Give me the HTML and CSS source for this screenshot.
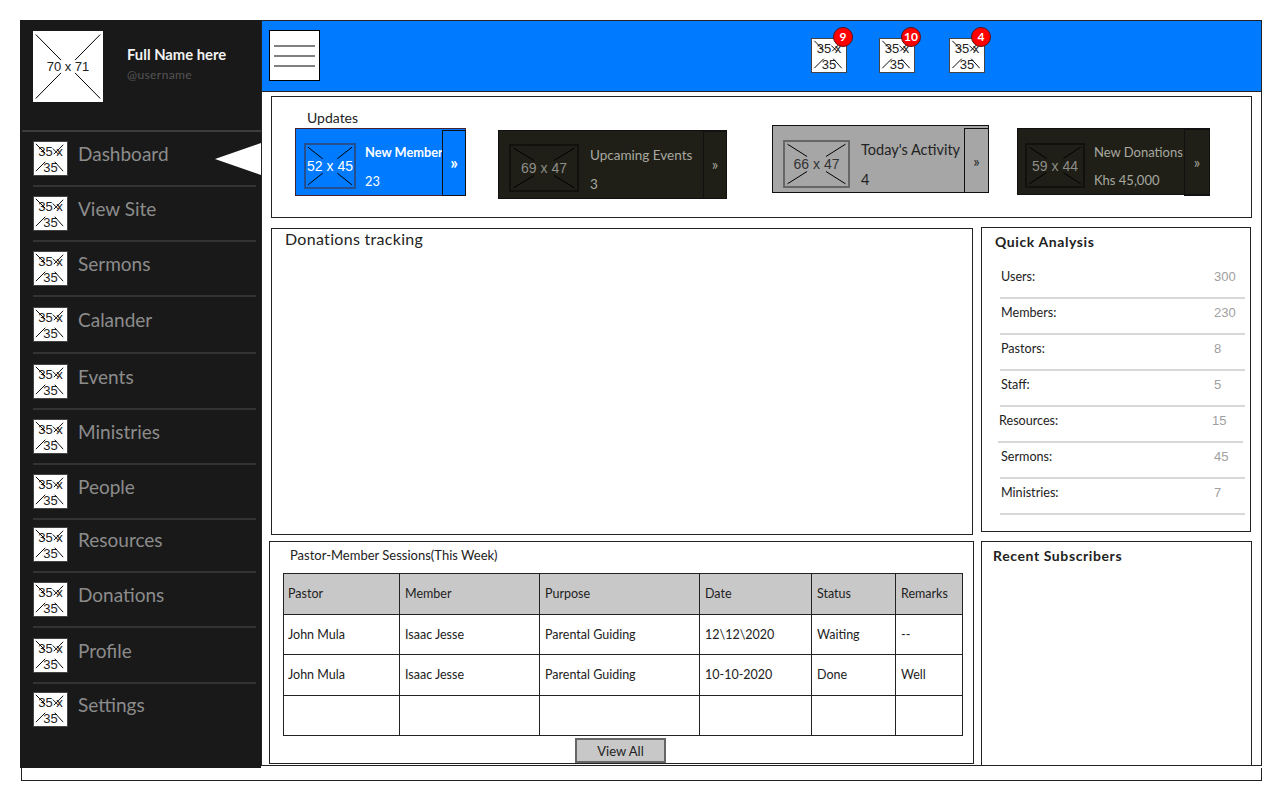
FILE: index.html
```html
<!DOCTYPE html>
<html lang="en">
<head>
  <meta charset="UTF-8">
  <meta name="viewport" content="width=device-width, initial-scale=1.0">
  <title>Church Dashboard</title>
  <link rel="stylesheet" href="styles.css">
</head>
<body>
  <svg class="defs" aria-hidden="true">
    <symbol id="ph-x" viewBox="0 0 100 100" preserveAspectRatio="none">
      <path d="M4 5 35 33M96 5 65 33M4 95 35 67M96 95 65 67" stroke="#000" fill="none" vector-effect="non-scaling-stroke"/>
    </symbol>
    <symbol id="ph-x-tight" viewBox="0 0 100 100" preserveAspectRatio="none">
      <path d="M4 5 40 41M96 5 60 41M4 95 40 59M96 95 60 59" stroke="#000" fill="none" vector-effect="non-scaling-stroke"/>
    </symbol>
    <symbol id="ph-icon" viewBox="0 0 35 35">
      <path d="M3 3 13 13M32 4 22 14M21 8 27 14M3 32 13 22M32 32 23 22" stroke="#000" fill="none"/>
    </symbol>
  </svg>

  <div class="app">
    <div class="app-body">
      <aside class="sidebar">
        <div class="profile">
          <div class="ph ph-avatar">
            <svg><use href="#ph-x-tight"/></svg>
            <span>70 x 71</span>
          </div>
          <div class="profile-text">
            <div class="profile-name">Full Name here</div>
            <div class="profile-user">@username</div>
          </div>
        </div>
        <nav class="nav">
          <a class="nav-item"><span class="icon"><svg><use href="#ph-icon"/></svg><span>35 x 35</span></span>Dashboard</a>
          <a class="nav-item"><span class="icon"><svg><use href="#ph-icon"/></svg><span>35 x 35</span></span>View Site</a>
          <a class="nav-item"><span class="icon"><svg><use href="#ph-icon"/></svg><span>35 x 35</span></span>Sermons</a>
          <a class="nav-item"><span class="icon"><svg><use href="#ph-icon"/></svg><span>35 x 35</span></span>Calander</a>
          <a class="nav-item"><span class="icon"><svg><use href="#ph-icon"/></svg><span>35 x 35</span></span>Events</a>
          <a class="nav-item"><span class="icon"><svg><use href="#ph-icon"/></svg><span>35 x 35</span></span>Ministries</a>
          <a class="nav-item"><span class="icon"><svg><use href="#ph-icon"/></svg><span>35 x 35</span></span>People</a>
          <a class="nav-item"><span class="icon"><svg><use href="#ph-icon"/></svg><span>35 x 35</span></span>Resources</a>
          <a class="nav-item"><span class="icon"><svg><use href="#ph-icon"/></svg><span>35 x 35</span></span>Donations</a>
          <a class="nav-item"><span class="icon"><svg><use href="#ph-icon"/></svg><span>35 x 35</span></span>Profile</a>
          <a class="nav-item"><span class="icon"><svg><use href="#ph-icon"/></svg><span>35 x 35</span></span>Settings</a>
        </nav>
        <div class="pointer"></div>
      </aside>

      <main class="main">
        <header class="topbar">
          <div class="burger"><i></i><i></i><i></i></div>
          <div class="alerts">
            <div class="icon alert"><svg><use href="#ph-icon"/></svg><span>35 x 35</span><b class="badge">9</b></div>
            <div class="icon alert"><svg><use href="#ph-icon"/></svg><span>35 x 35</span><b class="badge">10</b></div>
            <div class="icon alert"><svg><use href="#ph-icon"/></svg><span>35 x 35</span><b class="badge">4</b></div>
          </div>
        </header>

        <section class="panel updates">
          <div class="updates-title">Updates</div>
          <div class="cards">
            <div class="card card-members">
              <div class="ph"><svg><use href="#ph-x"/></svg><span>52 x 45</span></div>
              <div class="card-text"><strong>New Member</strong><span>23</span></div>
              <div class="card-more">&#187;</div>
            </div>
            <div class="card card-events">
              <div class="ph"><svg><use href="#ph-x"/></svg><span>69 x 47</span></div>
              <div class="card-text"><span>Upcaming Events</span><span>3</span></div>
              <div class="card-more">&#187;</div>
            </div>
            <div class="card card-activity">
              <div class="ph"><svg><use href="#ph-x"/></svg><span>66 x 47</span></div>
              <div class="card-text"><span>Today's Activity</span><span>4</span></div>
              <div class="card-more">&#187;</div>
            </div>
            <div class="card card-donations">
              <div class="ph"><svg><use href="#ph-x"/></svg><span>59 x 44</span></div>
              <div class="card-text"><span>New Donations</span><span>Khs 45,000</span></div>
              <div class="card-more">&#187;</div>
            </div>
          </div>
        </section>

        <div class="lower">
          <section class="panel chart">
            <h2 class="chart-title">Donations tracking</h2>
          </section>

          <section class="panel quick">
            <h3 class="side-title">Quick Analysis</h3>
            <div class="stat"><span>Users:</span><em>300</em></div>
            <div class="stat"><span>Members:</span><em>230</em></div>
            <div class="stat"><span>Pastors:</span><em>8</em></div>
            <div class="stat"><span>Staff:</span><em>5</em></div>
            <div class="stat stat-shift"><span>Resources:</span><em>15</em></div>
            <div class="stat"><span>Sermons:</span><em>45</em></div>
            <div class="stat"><span>Ministries:</span><em>7</em></div>
          </section>

          <section class="panel sessions">
            <div class="sessions-title">Pastor-Member Sessions(This Week)</div>
            <table class="sessions-table">
              <colgroup>
                <col class="col-pastor"><col class="col-member"><col class="col-purpose">
                <col class="col-date"><col class="col-status"><col class="col-remarks">
              </colgroup>
              <thead>
                <tr><th>Pastor</th><th>Member</th><th>Purpose</th><th>Date</th><th>Status</th><th>Remarks</th></tr>
              </thead>
              <tbody>
                <tr><td>John Mula</td><td>Isaac Jesse</td><td>Parental Guiding</td><td>12\12\2020</td><td>Waiting</td><td>--</td></tr>
                <tr><td>John Mula</td><td>Isaac Jesse</td><td>Parental Guiding</td><td>10-10-2020</td><td>Done</td><td>Well</td></tr>
                <tr><td></td><td></td><td></td><td></td><td></td><td></td></tr>
              </tbody>
            </table>
            <button class="view-all">View All</button>
          </section>

          <section class="panel subscribers">
            <h3 class="side-title">Recent Subscribers</h3>
          </section>
        </div>
      </main>
    </div>
    <div class="app-foot"></div>
  </div>
</body>
</html>
```

FILE: styles.css
```css
body {
  margin: 0;
  background: #fff;
  color: #222;
  font-family: Lato, "Open Sans", sans-serif;
}
.defs {
  display: none;
}

.app {
  width: 1242px;
  margin: 20px 0 0 20px;
}
.app-body {
  display: flex;
  align-items: flex-start;
  height: 748px;
}
.app-foot {
  height: 12px;
  margin-left: 1px;
  border: 1px solid #222;
  border-top: none;
}

/* placeholders */
.ph {
  position: relative;
  flex: none;
  display: flex;
  align-items: center;
  justify-content: center;
  box-sizing: border-box;
  font-family: "Liberation Sans", sans-serif;
  font-size: 14px;
}
.ph svg {
  position: absolute;
  inset: 0;
  width: 100%;
  height: 100%;
}
.icon {
  position: relative;
  flex: none;
  display: block;
  box-sizing: border-box;
  width: 35px;
  height: 35px;
  background: #fff;
  border: 1px solid #444;
  color: #222;
  font-family: "Liberation Sans", sans-serif;
  font-size: 13px;
  font-weight: 400;
  line-height: 16px;
  text-align: center;
  letter-spacing: 0;
}
.icon svg {
  position: absolute;
  inset: -1px;
  width: 100%;
  height: 100%;
}
.icon span {
  display: block;
  padding: 2px 3px 0;
}

/* sidebar */
.sidebar {
  position: relative;
  flex: none;
  width: 241px;
  height: 748px;
  background: #191919;
}
.profile {
  display: flex;
  box-sizing: border-box;
  height: 112px;
  padding: 11px 0 0 11px;
  border-bottom: 2px solid #3c3c3c;
  margin-left: 2px;
}
.ph-avatar {
  width: 70px;
  height: 71px;
  background: #fff;
  color: #222;
  font-size: 13px;
}
.profile-text {
  margin: 14px 0 0 24px;
}
.profile-name {
  color: #f2f2f2;
  font-size: 14.8px;
  font-weight: 700;
  line-height: 18px;
}
.profile-user {
  margin-top: 4px;
  color: #555;
  font-size: 12px;
  line-height: 16px;
  letter-spacing: .4px;
}
.nav {
  padding: 0 5px 0 13px;
}
.nav-item {
  display: flex;
  box-sizing: border-box;
  height: 55px;
  padding-top: 9px;
  gap: 10px;
  border-bottom: 2px solid #333;
  color: #8c8c8c;
  font-size: 19px;
  line-height: 26px;
}
.nav-item:last-child {
  border-bottom: none;
}
.nav-item:nth-child(4),
.nav-item:nth-child(5) {
  margin-top: 1px;
}
.nav-item:nth-child(4) {
  height: 56px;
}
.nav-item:nth-child(8) {
  margin-top: -2px;
}
.nav-item:nth-child(10) {
  margin-top: 1px;
}
.nav-item:nth-child(11) {
  margin-top: -1px;
}
.pointer {
  position: absolute;
  top: 123px;
  right: 0;
  width: 46px;
  height: 32px;
  background: #fff;
  clip-path: polygon(0 50%, 100% 0, 100% 100%);
}

/* main area */
.main {
  flex: none;
  box-sizing: border-box;
  width: 1001px;
  height: 746px;
  border: 1px solid #222;
  border-top: none;
}
.topbar {
  display: flex;
  box-sizing: border-box;
  height: 72px;
  padding: 9px 0 0 7px;
  background: #007aff;
  border-top: 1px solid #222;
  border-bottom: 1px solid #222;
}
.burger {
  display: flex;
  flex-direction: column;
  box-sizing: border-box;
  width: 51px;
  height: 51px;
  padding: 14px 4px 0;
  gap: 8px;
  background: #fff;
  border: 1px solid #000;
}
.burger i {
  display: block;
  height: 2px;
  background: #808080;
}
.alerts {
  display: flex;
  gap: 32px;
  margin: 8px 0 0 491px;
}
.alert {
  width: 36px;
}
.alert:last-child {
  margin-left: 2px;
}
.badge {
  position: absolute;
  top: -12px;
  right: -7px;
  box-sizing: border-box;
  width: 20px;
  height: 20px;
  background: #f00;
  border: 1px solid #5a1010;
  border-radius: 50%;
  color: #fff;
  font-family: Lato, sans-serif;
  font-size: 12px;
  font-weight: 700;
  line-height: 18px;
}

.panel {
  box-sizing: border-box;
  border: 1px solid #222;
  background: #fff;
}
.updates {
  height: 122px;
  margin: 4px 9px 0 9px;
  padding: 13px 0 0 23px;
}
.updates-title {
  padding-left: 12px;
  font-size: 14px;
  line-height: 16px;
}
.cards {
  display: flex;
  align-items: flex-start;
  margin-top: 2px;
}
.card {
  display: flex;
  box-sizing: border-box;
  color: #a8a8a0;
  font-size: 13.5px;
  line-height: 18px;
  border: 1px solid #111;
}
.card-text {
  flex: 1;
  min-width: 0;
  display: flex;
  flex-direction: column;
  gap: 11px;
  white-space: nowrap;
}
.card-more {
  flex: none;
  width: 24px;
  box-sizing: border-box;
  margin: 0 -1px -1px 0;
  border: 1px solid #111;
  text-align: center;
  font-size: 15px;
  line-height: 64px;
}
.card .ph {
  border: 2px solid #12120c;
  color: #8e8e88;
}

.card-members {
  width: 171px;
  height: 68px;
  background: #007aff;
  border-color: #4a2030;
  color: #fff;
}
.card-members .ph {
  width: 52px;
  height: 46px;
  margin: 14px 9px 0 8px;
  border-color: #24508f;
  color: #fff;
}
.card-members .card-text {
  padding-top: 14px;
  font-size: 12.8px;
}
.card-members .card-more {
  margin-top: 1px;
  background: #007aff;
  font-size: 17px;
  font-weight: 700;
}

.card-events {
  width: 229px;
  height: 69px;
  margin: 2px 0 0 32px;
  background: #1f1f17;
}
.card-events .ph {
  width: 70px;
  height: 48px;
  margin: 13px 11px 0 10px;
}
.card-events .card-text {
  padding-top: 15px;
}

.card-activity {
  width: 217px;
  height: 68px;
  margin: -3px 0 0 45px;
  background: #a6a6a6;
  color: #222;
}
.card-activity .ph {
  width: 67px;
  height: 48px;
  margin: 14px 11px 0 10px;
  border-color: #666;
  color: #333;
}
.card-activity .card-text {
  padding-top: 15px;
  gap: 12px;
  font-size: 14.5px;
}
.card-activity .card-more {
  width: 25px;
  margin-top: 2px;
}

.card-donations {
  width: 193px;
  height: 67px;
  margin-left: 28px;
  background: #1f1f17;
}
.card-donations .ph {
  width: 60px;
  height: 45px;
  margin: 14px 9px 0 7px;
}
.card-donations .card-text {
  padding-top: 14px;
  gap: 10px;
  font-size: 13px;
}
.card-donations .card-more {
  width: 26px;
  margin-bottom: -2px;
}

.lower {
  display: grid;
  grid-template-columns: 703px 271px;
  grid-template-rows: 308px 225px;
  column-gap: 7px;
  row-gap: 5px;
  margin: 10px 0 0 9px;
}
.chart {
  height: 307px;
  margin-right: 1px;
}
.chart-title {
  margin: 0;
  padding: 0 0 0 13px;
  font-size: 16px;
  font-weight: 400;
  line-height: 20px;
  letter-spacing: .3px;
}
.quick {
  height: 305px;
  margin: -1px 1px 0 0;
  padding: 6px 5px 0 18px;
}
.side-title {
  margin: 0;
  font-size: 14px;
  font-weight: 700;
  line-height: 16px;
  letter-spacing: .6px;
}
.quick .side-title {
  margin-left: -5px;
}
.stat {
  display: flex;
  box-sizing: border-box;
  height: 36px;
  align-items: center;
  padding: 0 0 7px 1px;
  border-bottom: 2px solid #d8d8d8;
  font-size: 12.6px;
}
.stat:nth-child(2) {
  height: 49px;
  padding-top: 13px;
}
.stat span {
  width: 213px;
}
.stat em {
  font-family: "Liberation Sans", sans-serif;
  font-size: 13px;
  font-style: normal;
  color: #a0a0a0;
}
.stat-shift {
  position: relative;
  left: -2px;
}

.sessions {
  height: 223px;
  margin: 0 0 0 -2px;
  padding: 6px 0 0 13px;
}
.sessions-title {
  padding-left: 7px;
  font-size: 13px;
  line-height: 14px;
}
.sessions-table {
  table-layout: fixed;
  width: 679px;
  margin-top: 11px;
  border-collapse: collapse;
  font-size: 12.5px;
}
.sessions-table th,
.sessions-table td {
  height: 39.5px;
  padding: 0 4px 0 5px;
  border: 1px solid #222;
  text-align: left;
  font-weight: 400;
}
.sessions-table th:first-child,
.sessions-table td:first-child {
  padding-left: 4px;
}
.sessions-table th {
  background: #c8c8c8;
}
.col-pastor { width: 116px; }
.col-member { width: 140px; }
.col-purpose { width: 160px; }
.col-date { width: 112px; }
.col-status { width: 84px; }
.col-remarks { width: 67px; }
.view-all {
  display: block;
  box-sizing: border-box;
  width: 91px;
  height: 25px;
  margin: 2px 0 0 292px;
  padding: 0;
  background: #c8c8c8;
  border: 2px solid #666;
  color: #222;
  font-family: inherit;
  font-size: 13px;
}
.subscribers {
  height: 225px;
  padding: 6px 0 0 11px;
}
```
